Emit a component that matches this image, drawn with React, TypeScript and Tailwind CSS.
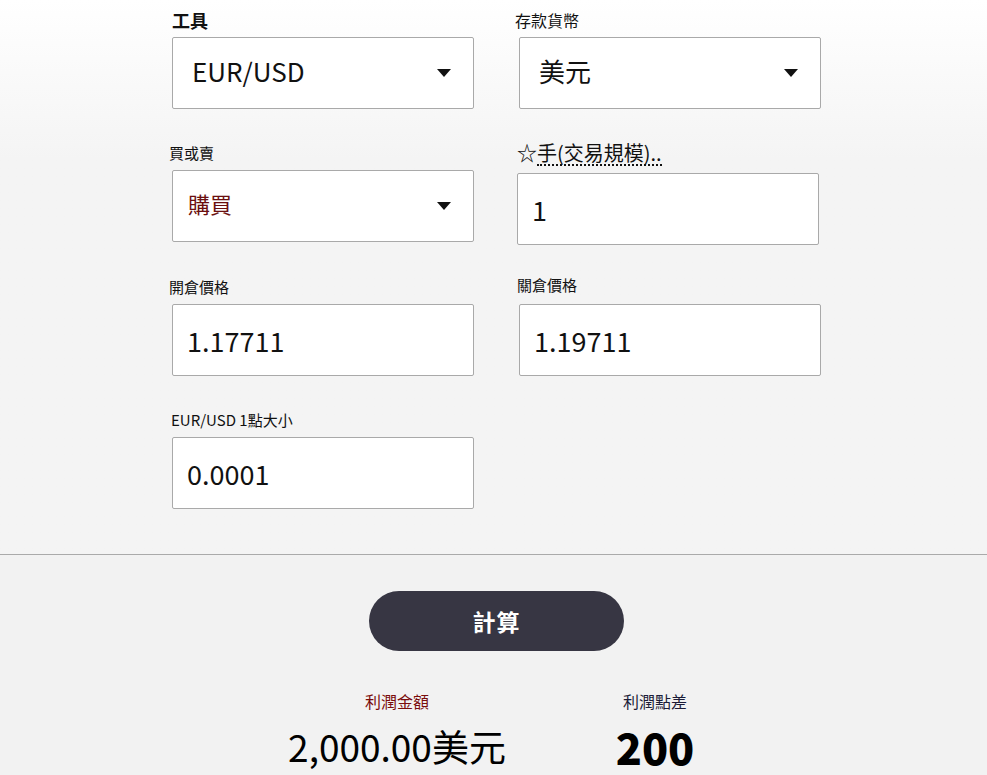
const font = "font-['Noto_Sans_CJK_TC','Noto_Sans',sans-serif]";

function Caret() {
  return (
    <svg width="14" height="8" viewBox="0 0 14 8" className="shrink-0">
      <path d="M0 0 L14 0 L7 8 Z" fill="#111" />
    </svg>
  );
}

function SelectBox({ value, className = "" }: { value: string; className?: string }) {
  return (
    <div
      className={`flex h-[72px] w-[302px] items-center justify-between rounded-[2px] border border-[#a9a9a9] bg-white pr-[22px] ${className}`}
    >
      {value === "購買" ? (
        <span className="pb-[6px] pl-[15px] text-[22px] text-[#6b0f0f]">{value}</span>
      ) : (
        <span className="pb-[5px] pl-[19px] text-[26px] text-[#111]">{value}</span>
      )}
      <Caret />
    </div>
  );
}

function InputBox({ value, className = "" }: { value: string; className?: string }) {
  return (
    <div
      className={`flex h-[72px] w-[302px] items-center rounded-[2px] border border-[#a9a9a9] bg-white pl-[14px] pt-[2px] text-[27px] text-[#111] ${className}`}
    >
      {value}
    </div>
  );
}

function Label({ children, className = "" }: { children: React.ReactNode; className?: string }) {
  return (
    <div className={`mb-[5px] h-[24px] whitespace-nowrap leading-[24px] text-[15px] text-[#111] ${className}`}>
      {children}
    </div>
  );
}

export default function App() {
  return (
    <div className={`min-h-screen w-full ${font}`}>
      <div className="bg-gradient-to-b from-white from-0% to-[#f4f4f4] to-[160px] pb-[45px] pt-[8px]">
        <div className="ml-[172px] flex flex-col">
          <div className="flex gap-[45px]">
            <div>
              <Label className="text-[18px] font-bold">工具</Label>
              <SelectBox value="EUR/USD" />
            </div>
            <div>
              <Label className="-ml-[4px] text-[16px]">存款貨幣</Label>
              <SelectBox value="美元" />
            </div>
          </div>

          <div className="mt-[32px] flex gap-[45px]">
            <div>
              <Label className="-ml-[3px] text-[15.5px]">買或賣</Label>
              <SelectBox value="購買" />
            </div>
            <div className="-ml-[2px]">
              <div className="mb-[5px] flex h-[27px] items-start whitespace-nowrap text-[20px] leading-[24px] text-[#111]">
                <span>☆</span>
                <span className="inline-block border-b-2 border-dotted border-[#111] leading-[23px]">
                  手(交易規模)..
                </span>
              </div>
              <InputBox value="1" />
            </div>
          </div>

          <div className="mt-[30px] flex gap-[45px]">
            <div>
              <Label className="-ml-[3px]">開倉價格</Label>
              <InputBox value="1.17711" />
            </div>
            <div>
              <Label className="-ml-[2px] -mt-[2px] mb-[7px] text-[15.5px]">關倉價格</Label>
              <InputBox value="1.19711" />
            </div>
          </div>

          <div className="mt-[32px] flex gap-[45px]">
            <div>
              <Label className="-ml-[1px]">EUR/USD 1點大小</Label>
              <InputBox value="0.0001" />
            </div>
          </div>
        </div>
      </div>

      <div className="border-t border-[#aaaaaa] bg-[#f2f2f2] pb-[40px] pt-[36px]">
        <div className="ml-[369px] flex h-[60px] w-[255px] items-center justify-center rounded-full bg-[#373643] text-[23px] font-bold tracking-[1px] text-white">
          計算
        </div>

        <div className="ml-[268px] mt-[39px] flex">
          <div className="flex w-[258px] flex-col items-center">
            <div className="text-[16px] leading-[22px] text-[#7a0c0c]">利潤金額</div>
            <div className="mt-[14px] text-[37px] leading-[40px] text-black">2,000.00美元</div>
          </div>
          <div className="flex w-[258px] flex-col items-center">
            <div className="text-[16px] leading-[22px] text-[#1c1c38]">利潤點差</div>
            <div className="mt-[14px] text-[43px] font-black leading-[40px] text-black">200</div>
          </div>
        </div>
      </div>
    </div>
  );
}
